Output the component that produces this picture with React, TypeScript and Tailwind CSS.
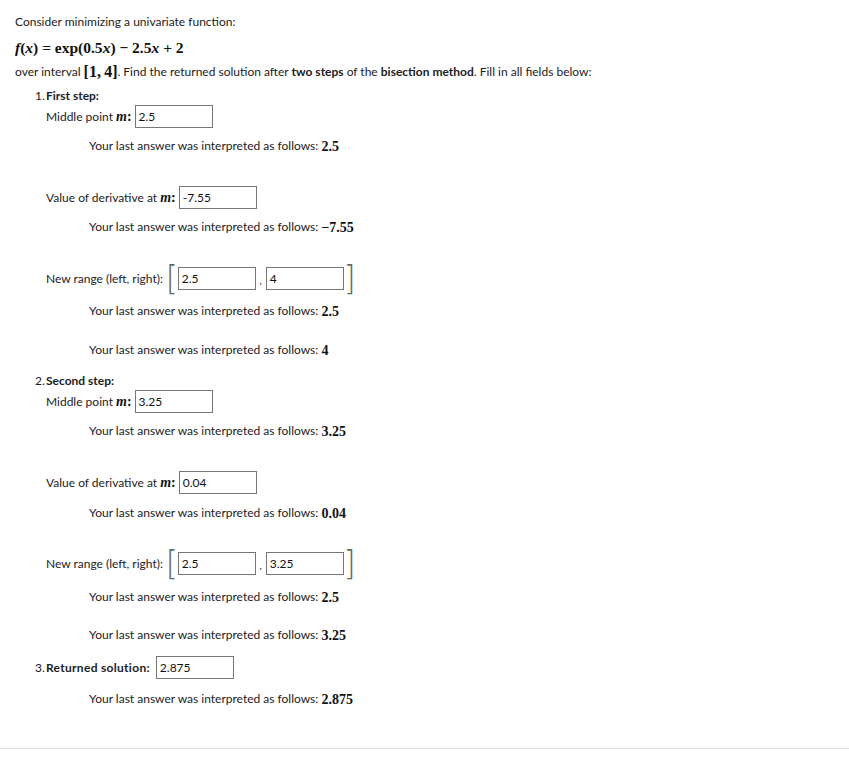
import React from "react";

const M: React.FC<{ children: React.ReactNode; className?: string }> = ({ children, className }) => (
  <span className={"font-bold text-[14px] text-[#111] " + (className || "")} style={{ fontFamily: '"Liberation Serif", "DejaVu Serif", serif' }}>
    {children}
  </span>
);

const V: React.FC<{ children: React.ReactNode }> = ({ children }) => <i className="italic">{children}</i>;

const Input: React.FC<{ value: string }> = ({ value }) => (
  <div className="h-[23px] w-[78px] border border-[#767676] bg-white pl-[3px] flex items-center text-[12px] text-[#111]">
    {value}
  </div>
);

const Interp: React.FC<{ v: React.ReactNode; mt: string }> = ({ v, mt }) => (
  <div className={"h-[18px] flex items-center pl-[43px] " + mt}>
    <span>Your last answer was interpreted as follows:&nbsp;</span>
    <M>{v}</M>
  </div>
);

const Bracket: React.FC<{ ch: string }> = ({ ch }) => (
  <span className="text-[30px] leading-none font-light text-[#666] scale-y-110 inline-block" style={{ fontFamily: '"DejaVu Sans", sans-serif' }}>
    {ch}
  </span>
);

const Label: React.FC<{ children: React.ReactNode; value: string; mt?: string }> = ({ children, value, mt }) => (
  <div className={"h-[23px] flex items-center " + (mt || "")}>
    {children}
    <span className="w-[3px]" />
    <Input value={value} />
  </div>
);

const Range: React.FC<{ a: string; b: string; mt: string }> = ({ a, b, mt }) => (
  <div className={"h-[23px] flex items-center " + mt}>
    <span>New range (left, right):&nbsp;</span>
    <Bracket ch="[" />
    <Input value={a} />
    <span className="w-[10px] text-center text-[10px] self-end pb-[2px]">,</span>
    <Input value={b} />
    <Bracket ch="]" />
  </div>
);

const Num: React.FC<{ n: string }> = ({ n }) => <span className="w-[11px] shrink-0">{n}</span>;

export default function App() {
  return (
    <div
      className="min-h-[773px] w-[849px] bg-white text-[#1d2125] text-[12px] flex flex-col"
      style={{ fontFamily: 'Lato, "Noto Sans", sans-serif' }}
    >
      <div className="pt-[13px] pl-[15px] flex flex-col">
        <div className="h-[18px] flex items-center">Consider minimizing a univariate function:</div>
        <div className="h-[22px] mt-[6px] flex items-center">
          <M className="text-[15.5px]">
            <V>f</V>(<V>x</V>)&nbsp;=&nbsp;exp(0.5<V>x</V>)&nbsp;−&nbsp;2.5<V>x</V>&nbsp;+&nbsp;2
          </M>
        </div>
        <div className="h-[18px] mt-[4px] flex items-center">
          <span>over interval&nbsp;</span>
          <M className="text-[16px]">[1,&thinsp;4]</M>
          <span>. Find the returned solution after&nbsp;</span>
          <b>two steps</b>
          <span>&nbsp;of the&nbsp;</span>
          <b>bisection method</b>
          <span>. Fill in all fields below:</span>
        </div>

        <div className="flex flex-col pl-[31px] mt-[6px]">
          {/* Step 1 */}
          <div className="h-[18px] flex items-center -ml-[11px]">
            <Num n="1." />
            <b>First step:</b>
          </div>
          <Label value="2.5">
            <span>Middle point&nbsp;</span>
            <M><V>m</V>:</M>
          </Label>
          <Interp v="2.5" mt="mt-[9px]" />
          <Label value="-7.55" mt="mt-[31px]">
            <span>Value of derivative at&nbsp;</span>
            <M><V>m</V>:</M>
          </Label>
          <Interp v="−7.55" mt="mt-[9px]" />
          <Range a="2.5" b="4" mt="mt-[31px]" />
          <Interp v="2.5" mt="mt-[12px]" />
          <Interp v="4" mt="mt-[21px]" />

          {/* Step 2 */}
          <div className="h-[18px] flex items-center -ml-[11px] mt-[13px]">
            <Num n="2." />
            <b>Second step:</b>
          </div>
          <Label value="3.25">
            <span>Middle point&nbsp;</span>
            <M><V>m</V>:</M>
          </Label>
          <Interp v="3.25" mt="mt-[9px]" />
          <Label value="0.04" mt="mt-[31px]">
            <span>Value of derivative at&nbsp;</span>
            <M><V>m</V>:</M>
          </Label>
          <Interp v="0.04" mt="mt-[10px]" />
          <Range a="2.5" b="3.25" mt="mt-[30px]" />
          <Interp v="2.5" mt="mt-[13px]" />
          <Interp v="3.25" mt="mt-[20px]" />

          {/* Step 3 */}
          <div className="h-[23px] flex items-center -ml-[11px] mt-[12px]">
            <Num n="3." />
            <b className="tracking-[0.3px]">Returned solution:</b>
            <span className="w-[6px]" />
            <Input value="2.875" />
          </div>
          <Interp v="2.875" mt="mt-[11px]" />
        </div>
      </div>
      <div className="mt-[40px] h-px bg-[#dedede] w-full" />
    </div>
  );
}
